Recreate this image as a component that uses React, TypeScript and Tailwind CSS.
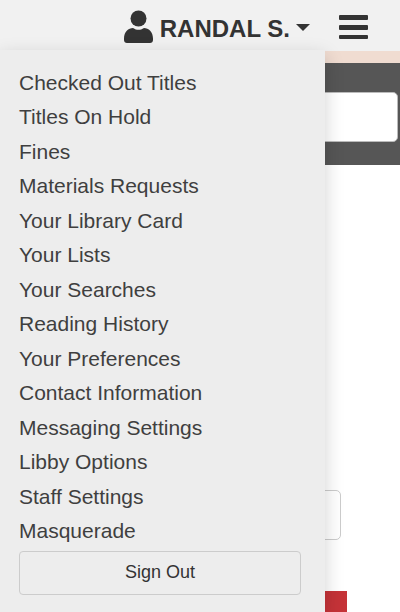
const items = [
  "Checked Out Titles",
  "Titles On Hold",
  "Fines",
  "Materials Requests",
  "Your Library Card",
  "Your Lists",
  "Your Searches",
  "Reading History",
  "Your Preferences",
  "Contact Information",
  "Messaging Settings",
  "Libby Options",
  "Staff Settings",
  "Masquerade",
];

export default function App() {
  return (
    <div className="relative h-[612px] w-[400px] overflow-hidden bg-white font-['Liberation_Sans',Arial,sans-serif] text-[#333]">
      <header className="flex h-[51px] items-center justify-end bg-[#f1f1f1] pr-[32px] pt-[5px]">
        <svg width="29" height="33" viewBox="0 0 29 33" className="mr-[7px] mt-[-3px] text-[#333]" fill="currentColor">
          <circle cx="14.5" cy="8.5" r="8" />
          <path d="M0 28.5C0 22 4.5 18 9 18c2 1.3 3.6 1.8 5.5 1.8S18 19.300 20 18c4.500 0 9 4 9 10.500V30c0 1.700-1.300 3-3 3H3c-1.700 0-3-1.300-3-3z" />
        </svg>
        <span className="mt-[1px] text-[24px] font-bold leading-none text-[#333]">RANDAL S.</span>
        <span className="ml-[6px] mr-[29px] mt-[-1px] h-0 w-0 border-x-[7px] border-t-[7px] border-x-transparent border-t-[#333]" />
        <div className="mt-[-2px] flex w-[29px] flex-col gap-[5px]">
          <span className="h-[5px] rounded-[1px] bg-[#333]" />
          <span className="h-[5px] rounded-[1px] bg-[#333]" />
          <span className="h-[4px] rounded-[1px] bg-[#333]" />
        </div>
      </header>
      <div className="h-[12px] bg-[#f0dcd1]" />
      <div className="h-[102px] bg-[#565656] pl-[200px] pr-[2px] pt-[29px]">
        <div className="h-[50px] rounded-[5px] border border-[#bbb] bg-white" />
      </div>
      <div className="h-[375px] pl-[200px] pr-[59px] pt-[325px]">
        <div className="h-[50px] rounded-[5px] border border-[#ccc] bg-white" />
      </div>
      <div className="mt-[51px] ml-[200px] h-[21px] w-[147px] bg-[#c53338]" />

      <div className="absolute left-0 top-[50px] h-[562px] w-[325px] bg-[#ededed] pl-[19px] pr-[24px] pt-[15.6px] shadow-[0_6px_18px_rgba(0,0,0,0.18)]">
        <ul className="flex flex-col">
          {items.map((t) => (
            <li key={t} className="h-[34.5px] text-[21px] leading-[33px] text-[#3f3f3f]">
              {t}
            </li>
          ))}
        </ul>
        <button className="mt-[2.4px] h-[44px] w-[282px] rounded-[4px] border border-[#ccc] bg-[#ededed] pb-[1px] text-center text-[18px] text-[#333]">
          Sign Out
        </button>
      </div>
    </div>
  );
}
